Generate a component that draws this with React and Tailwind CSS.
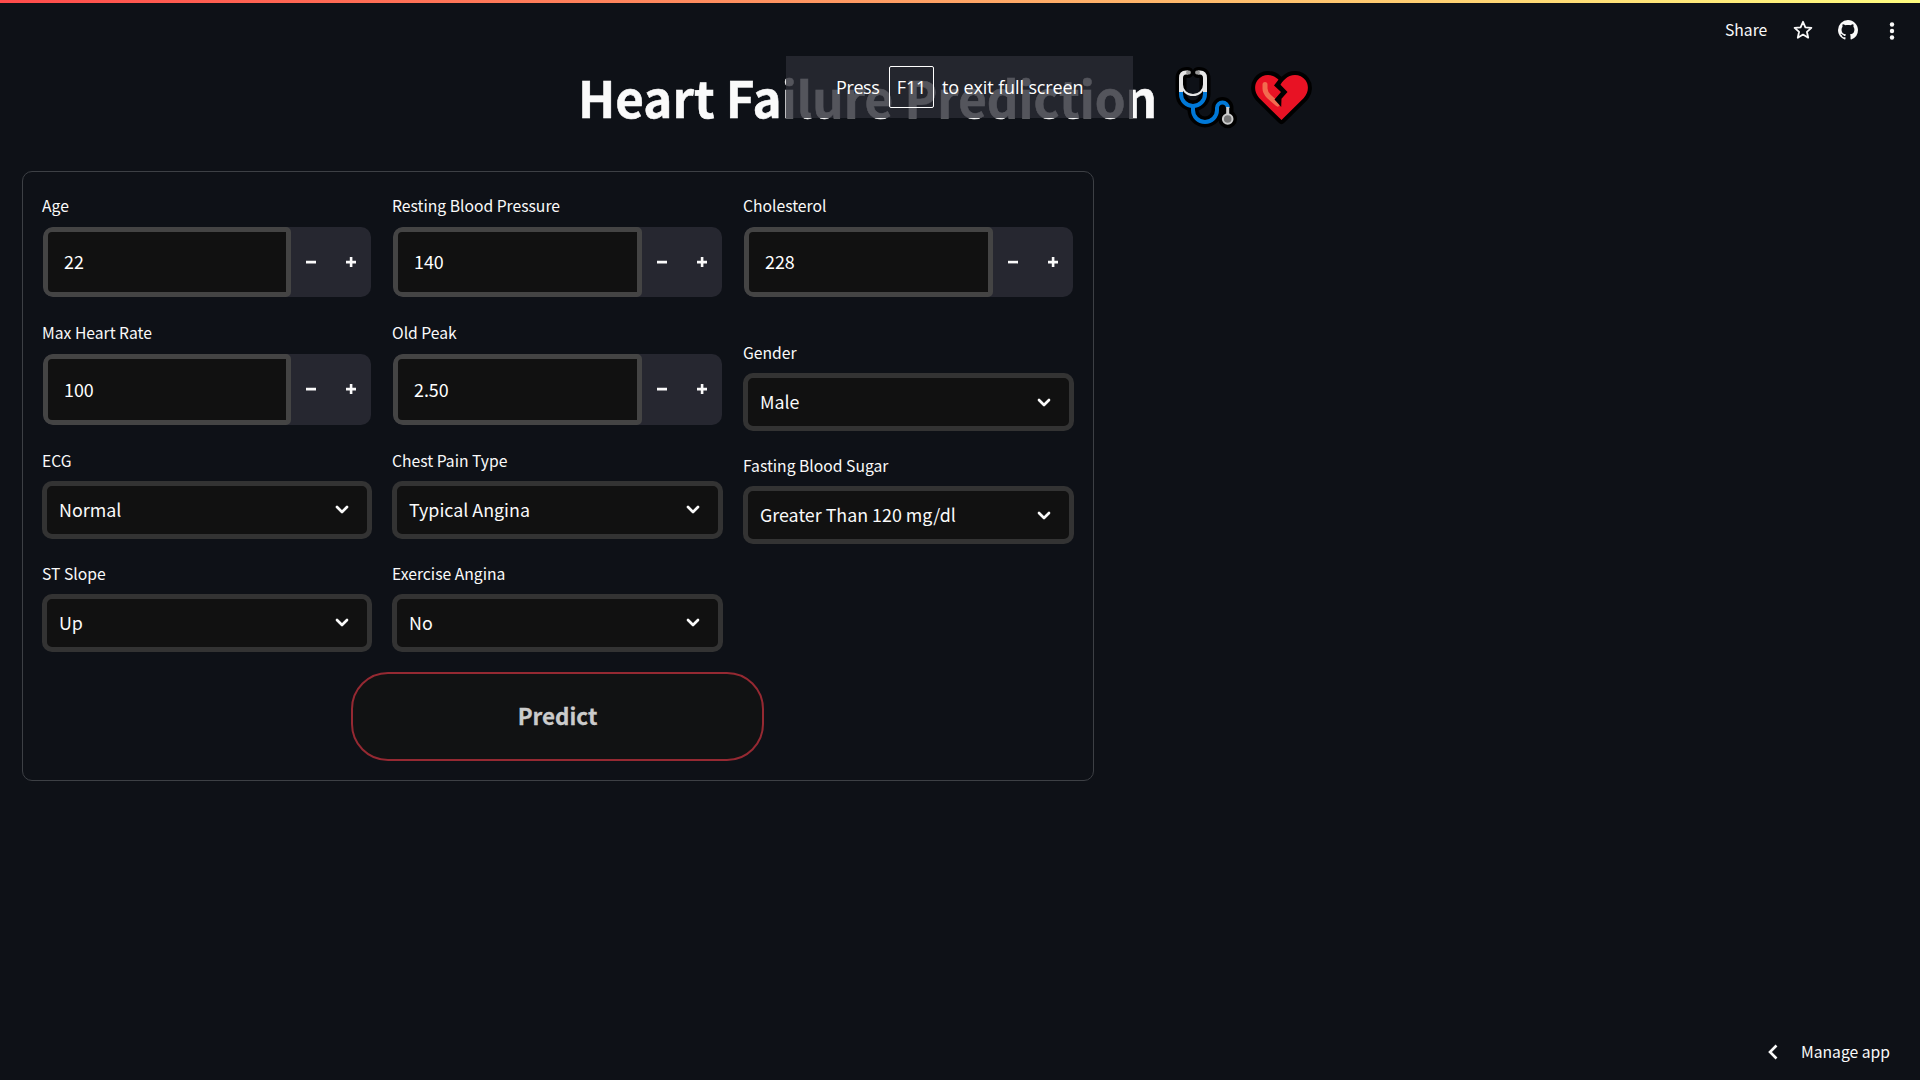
import React from "react";
import { VscGithubInverted } from "react-icons/vsc";

function Field({ label, children }) {
  return (
    <div className="flex flex-col">
      <div className="h-[35px] text-[15.7px] leading-[30px] text-[#fafafa] whitespace-nowrap">{label}</div>
      {children}
    </div>
  );
}

function NumberField({ label, value }) {
  return (
    <Field label={label}>
      <div className="w-full h-[72.33px] p-px flex">
        <div className="flex w-full rounded-[10px] bg-[#262730] overflow-hidden">
          <div className="flex-1 border-[5px] border-[#444] bg-[#111] rounded-l-[9px] rounded-r-[5px] pl-4 pb-px flex items-center text-[17.85px] text-white">
            {value}
          </div>
          <div className="w-10 flex items-center justify-center">
            <svg width="10" height="10" viewBox="0 0 10 10" fill="#fafafa"><path d="M0 3.8h10v2.6H0z" /></svg>
          </div>
          <div className="w-10 flex items-center justify-center">
            <svg width="10" height="10" viewBox="0 0 10 10" fill="#fafafa"><path d="M3.8 0h2.6v3.8H10v2.6H6.4V10H3.8V6.400H0V3.800h3.800z" /></svg>
          </div>
        </div>
      </div>
    </Field>
  );
}

function SelectField({ label, value }) {
  return (
    <Field label={label}>
      <div className="h-[58px] border-[5px] border-[#333] bg-[#111] rounded-[10px] pl-[12px] pr-[18px] flex items-center justify-between text-[17.85px] text-[#fafafa]">
        <span className="whitespace-nowrap pb-px">{value}</span>
        <svg className="mt-px" width="14" height="10" viewBox="0 0 14 10" fill="none" stroke="#fafafa" strokeWidth="2.7" strokeLinecap="round" strokeLinejoin="round"><path d="M2 2l5 5 5-5" /></svg>
      </div>
    </Field>
  );
}

function Stethoscope() {
  return (
    <svg width="72" height="72" viewBox="0 0 72 72" fill="none" strokeLinecap="round">
      <g stroke="#000" strokeWidth="11">
        <path d="M18 12.500h-1q-6 0-6 6V34a12 12 0 0 0 24 0V18.500q0-6-6-6h-1" />
        <path d="M23 46v4a12 12 0 0 0 24 0v-2a5.500 5.500 0 0 1 11 0v9" />
        <circle cx="57.700" cy="59" r="3.800" />
      </g>
      <path d="M23 45v5a12 12 0 0 0 24 0v-2a5.500 5.500 0 0 1 11 0" stroke="#0078d7" strokeWidth="4" strokeLinecap="butt" />
      <path d="M11 31v3a12 12 0 0 0 24 0v-3" stroke="#0078d7" strokeWidth="4" strokeLinecap="butt" />
      <path d="M11 32V18q0-5.500 5-5.500h2M35 32V18q0-5.500-5-5.500h-2" stroke="#e6e6e6" strokeWidth="4" strokeLinecap="butt" />
      <path d="M12 24.500a11 10.500 0 0 0 22 0" stroke="#e6e6e6" strokeWidth="2" strokeLinecap="butt" />
      <path d="M18 12.500h1M28 12.500h-1" stroke="#999" strokeWidth="3.800" />
      <path d="M57.700 47v7" stroke="#ccc" strokeWidth="3" strokeLinecap="butt" />
      <circle cx="57.700" cy="59" r="4.800" fill="#767676" stroke="#ccc" strokeWidth="2" />
    </svg>
  );
}

const HEART =
  "M35.500 58L13.200 36C8.500 31 7.700 23.500 11.500 18.300c5-6.800 14.800-6.800 20.300-1.300l3.700 3.500 3.700-3.500c5.500-5.500 15.300-5.500 20.300 1.300 3.800 5.200 3 12.700-1.700 17.700z";

function BrokenHeart() {
  return (
    <svg width="72" height="70" viewBox="0 0 72 70">
      <path d={HEART} fill="#e81224" stroke="#000" strokeWidth="8" strokeLinejoin="round" />
      <path d={HEART} fill="#e81224" />
      <path d="M19 22.500v4q0 4 4 8l8.500 7.500" fill="none" stroke="#f26b4f" strokeWidth="5" strokeLinecap="round" />
      <path d="M33 17l-5 6.500 7 6.500-6.500 7.500 6.700 7.500.3-8.200 6-6.800-7-7.200 3-5.300z" fill="#000" />
    </svg>
  );
}

export default function App() {
  return (
    <div className="relative w-[1920px] h-[1080px] overflow-hidden bg-[#0e1117] text-[#fafafa] flex flex-col font-['Noto_Sans_CJK_SC',sans-serif]">
      <div className="h-[3px] shrink-0 bg-[linear-gradient(90deg,#ff4b4b,#fffd80)]" />
      <header className="h-[54px] shrink-0 flex items-center justify-end pr-[25px]">
        <span className="text-[15.7px] leading-6 w-[43px] whitespace-nowrap">Share</span>
        <svg className="ml-[25px]" width="20" height="20" viewBox="0 0 20 20" fill="none" stroke="#fafafa" strokeWidth="1.800" strokeLinejoin="round"><path d="M10 1.800l2.400 5.500 6 .5-4.500 4 1.300 5.900L10 14.600l-5.200 3.100 1.300-5.900-4.500-4 6-.5z" /></svg>
        <VscGithubInverted className="ml-[25px]" size={20} />
        <svg className="ml-[31px] mt-px" width="6" height="18" viewBox="0 0 6 18" fill="#fafafa"><circle cx="3" cy="2.500" r="2.200" /><circle cx="3" cy="9" r="2.200" /><circle cx="3" cy="15.500" r="2.200" /></svg>
      </header>

      <div className="h-[114px] shrink-0 pl-[578px] flex items-start">
        <h1 className="w-[592px] text-[49.3px] leading-[60px] pt-[10px] font-bold whitespace-nowrap [-webkit-text-stroke:0.5px_#fafafa]">Heart Failure Prediction</h1>
        <div className="flex gap-[4px] pt-[3px]">
          <Stethoscope />
          <div className="pt-[2px]"><BrokenHeart /></div>
        </div>
      </div>

      <main className="ml-[22px] w-[1072px] h-[610px] shrink-0 border border-[#3d4045] rounded-[10px] px-[19px] pt-[19px]">
        <div className="grid grid-cols-[330px_331px_331px] gap-5">
          <div className="flex flex-col gap-5">
            <NumberField label="Age" value="22" />
            <NumberField label="Max Heart Rate" value="100" />
            <SelectField label="ECG" value="Normal" />
            <SelectField label="ST Slope" value="Up" />
          </div>
          <div className="flex flex-col gap-5">
            <NumberField label="Resting Blood Pressure" value="140" />
            <NumberField label="Old Peak" value="2.50" />
            <SelectField label="Chest Pain Type" value="Typical Angina" />
            <SelectField label="Exercise Angina" value="No" />
          </div>
          <div className="flex flex-col gap-5">
            <NumberField label="Cholesterol" value="228" />
            <div className="pt-5"><SelectField label="Gender" value="Male" /></div>
            <SelectField label="Fasting Blood Sugar" value="Greater Than 120 mg/dl" />
          </div>
        </div>
        <button className="mt-5 ml-[309px] flex w-[413px] h-[89px] items-center justify-center rounded-[37px] border-2 border-[#952932] bg-[#111213] text-[22.4px] font-bold text-[#cbcbcb] [-webkit-text-stroke:0.3px_#cbcbcb]">
          Predict
        </button>
      </main>

      <footer className="mt-auto h-[56px] shrink-0 pr-[30px] flex items-center justify-end">
        <svg className="mr-[22px]" width="12" height="16" viewBox="0 0 12 16" fill="none" stroke="#fafafa" strokeWidth="2.600"><path d="M9.500 1.500L3 8l6.500 6.500" /></svg>
        <span className="text-[15.7px] leading-6 whitespace-nowrap">Manage app</span>
      </footer>

      <div className="absolute left-[786px] top-[56px] w-[347px] h-[62px] bg-[rgba(42,44,52,0.8)] flex items-center pl-[50px] text-white text-[18px] tracking-[-0.12px] font-['Open_Sans',sans-serif] whitespace-nowrap">
        <span className="w-[53px] tracking-[-0.4px]">Press</span>
        <span className="w-[45px] h-[42px] border border-white rounded-[2px] flex items-center justify-center">F11</span>
        <span className="ml-[8px]">to exit full screen</span>
      </div>
    </div>
  );
}
